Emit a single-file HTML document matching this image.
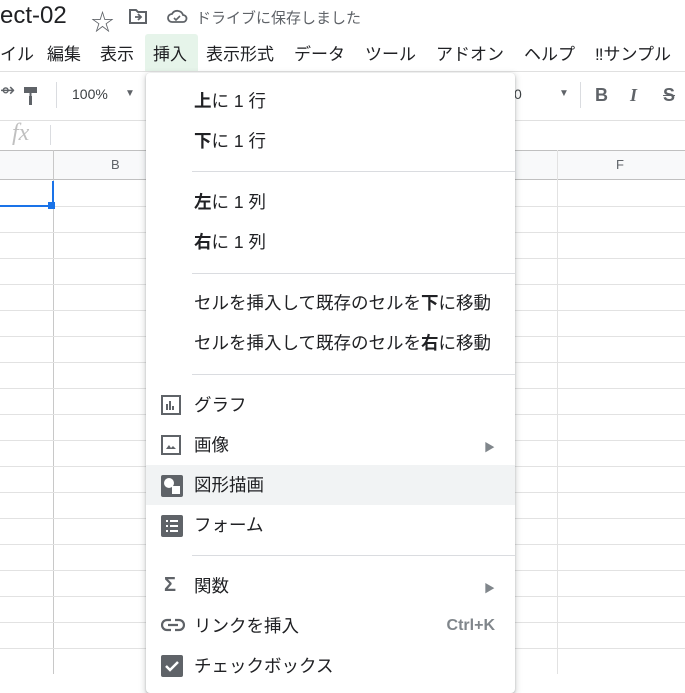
<!DOCTYPE html>
<html><head><meta charset="utf-8"><style>
body{margin:0;width:685px;height:674px;overflow:hidden;background:#fff;font-family:"Liberation Sans","Noto Sans CJK JP",sans-serif;position:relative;color:#202124}
.a{position:absolute}
.hl{position:absolute;left:0;width:685px;height:1px;background:#e2e2e2}
.vl{position:absolute;top:150px;width:1px;height:524px;background:#e2e2e2}
.menu{position:absolute;left:146px;top:73px;width:369px;height:620px;background:#fff;border-radius:4px;box-shadow:0 2px 6px 2px rgba(60,64,67,.15),0 1px 2px rgba(60,64,67,.3)}
.it{position:absolute;left:48px;font-size:17.5px;color:#202124;line-height:20px}
.sep{position:absolute;left:46px;right:0;height:1px;background:#dadce0}
.ic{position:absolute;left:15px}
.arr{position:absolute;right:20px;font-size:11px;color:#80868b}
.mb{position:absolute;top:40px;font-size:17px;color:#202124}
</style></head><body>
<div class="a" style="left:0;top:2px;font-size:24px;color:#202124">ect-02</div>
<div class="a" style="left:91px;top:3px;font-size:23px;color:#5f6368">☆</div>
<svg class="a" style="left:128px;top:7px" width="20" height="18" viewBox="0 0 20 18"><path d="M2 3h6l2 2h8v11H2z" fill="none" stroke="#5f6368" stroke-width="2"/><path d="M7 10h6M10 7l3 3-3 3" stroke="#5f6368" stroke-width="1.8" fill="none"/></svg>
<svg class="a" style="left:166px;top:8px" width="22" height="16" viewBox="0 0 22 16"><path d="M6 14a4 4 0 0 1 0-8 6 6 0 0 1 11 1 3.5 3.5 0 0 1 0 7z" fill="none" stroke="#5f6368" stroke-width="1.8"/><path d="M8 10l2 2 4-4" stroke="#5f6368" stroke-width="1.6" fill="none"/></svg>
<div class="a" style="left:196px;top:7px;font-size:15px;color:#5f6368">ドライブに保存しました</div>
<div class="a" style="left:145px;top:34px;width:53px;height:38px;background:#e6f4ea;border-radius:3px 3px 0 0"></div>
<div class="mb" style="left:0">イル</div><div class="mb" style="left:47px">編集</div><div class="mb" style="left:100px">表示</div><div class="mb" style="left:153px">挿入</div><div class="mb" style="left:206px">表示形式</div><div class="mb" style="left:294px">データ</div><div class="mb" style="left:365px">ツール</div><div class="mb" style="left:436px">アドオン</div><div class="mb" style="left:524px">ヘルプ</div><div class="mb" style="left:595px">‼サンプル</div>
<div class="a" style="left:0;top:71px;width:685px;height:1px;background:#e0e0e0"></div>
<div class="a" style="left:0;top:80px;width:10px;height:26px;font-size:18px;color:#5f6368">⇴</div>
<svg class="a" style="left:22px;top:86px" width="18" height="20"><path d="M2 1h13v6H2zM7 10h3v9H7z" fill="#5f6368"/><path d="M8.5 7v3" stroke="#5f6368" stroke-width="2"/></svg>
<div class="a" style="left:56px;top:82px;width:1px;height:26px;background:#dadce0"></div>
<div class="a" style="left:72px;top:86px;font-size:14px;color:#3c4043">100%</div>
<div class="a" style="left:125px;top:88px;font-size:10px;color:#5f6368">▼</div>
<div class="a" style="left:514px;top:86px;font-size:14px;color:#3c4043">0</div>
<div class="a" style="left:559px;top:88px;font-size:10px;color:#5f6368">▼</div>
<div class="a" style="left:580px;top:82px;width:1px;height:26px;background:#dadce0"></div>
<div class="a" style="left:595px;top:85px;font-size:18px;font-weight:bold;color:#5f6368">B</div>
<div class="a" style="left:630px;top:85px;font-size:18px;font-style:italic;font-weight:bold;color:#5f6368;font-family:'Liberation Serif',serif">I</div>
<div class="a" style="left:663px;top:85px;font-size:18px;font-weight:bold;color:#5f6368;text-decoration:line-through">S</div>
<div class="a" style="left:0;top:120px;width:685px;height:1px;background:#e0e0e0"></div>
<div class="a" style="left:12px;top:120px;font-size:24px;font-style:italic;color:#c0c0c0;font-family:'Liberation Serif',serif">fx</div>
<div class="a" style="left:50px;top:125px;width:1px;height:20px;background:#dadce0"></div>
<div class="a" style="left:0;top:150px;width:685px;height:30px;background:#f8f9fa;border-top:1px solid #c0c0c0;border-bottom:1px solid #c0c0c0;box-sizing:border-box"></div>
<div class="a" style="left:111px;top:157px;font-size:13px;color:#5f6368">B</div>
<div class="a" style="left:616px;top:157px;font-size:13px;color:#5f6368">F</div>
<div class="vl" style="left:53px;background:#c8c8c8"></div>
<div class="vl" style="left:557px"></div>
<div class="hl" style="top:206px"></div><div class="hl" style="top:232px"></div><div class="hl" style="top:258px"></div><div class="hl" style="top:284px"></div><div class="hl" style="top:310px"></div><div class="hl" style="top:336px"></div><div class="hl" style="top:362px"></div><div class="hl" style="top:388px"></div><div class="hl" style="top:414px"></div><div class="hl" style="top:440px"></div><div class="hl" style="top:466px"></div><div class="hl" style="top:492px"></div><div class="hl" style="top:518px"></div><div class="hl" style="top:544px"></div><div class="hl" style="top:570px"></div><div class="hl" style="top:596px"></div><div class="hl" style="top:622px"></div><div class="hl" style="top:648px"></div>
<div class="a" style="left:0;top:205px;width:52px;height:2px;background:#1a73e8"></div>
<div class="a" style="left:52px;top:181px;width:2px;height:24px;background:#1a73e8"></div>
<div class="a" style="left:48px;top:202px;width:7px;height:7px;background:#1a73e8"></div>

<div class="menu">
<div class="it" style="top:18px"><b>上</b>に 1 行</div>
<div class="it" style="top:58px"><b>下</b>に 1 行</div>
<div class="sep" style="top:98px"></div>
<div class="it" style="top:119px"><b>左</b>に 1 列</div>
<div class="it" style="top:159px"><b>右</b>に 1 列</div>
<div class="sep" style="top:200px"></div>
<div class="it" style="top:220px">セルを挿入して既存のセルを<b>下</b>に移動</div>
<div class="it" style="top:260px">セルを挿入して既存のセルを<b>右</b>に移動</div>
<div class="sep" style="top:301px"></div>
<svg class="ic" style="top:322px" width="20" height="20"><rect x="1" y="1" width="18" height="18" fill="none" stroke="#5f6368" stroke-width="2"/><path d="M6 9v6M9 6v9M12 11v4" stroke="#5f6368" stroke-width="2"/></svg>
<div class="it" style="top:322px">グラフ</div>
<svg class="ic" style="top:362px" width="20" height="20"><rect x="1" y="1" width="18" height="18" fill="none" stroke="#5f6368" stroke-width="2"/><path d="M5 14l3-4 2 3 2-2 3 3z" fill="#5f6368"/></svg>
<div class="it" style="top:362px">画像</div><div class="arr" style="top:366px">▶</div>
<div class="a" style="left:0;top:392px;width:369px;height:40px;background:#f1f3f4"></div>
<svg class="ic" style="top:402px" width="22" height="22"><rect width="22" height="22" rx="2" fill="#5f6368"/><circle cx="8" cy="8" r="5" fill="#fff"/><rect x="11" y="11" width="8" height="8" fill="#fff"/></svg>
<div class="it" style="top:402px">図形描画</div>
<svg class="ic" style="top:442px" width="22" height="22"><rect width="22" height="22" rx="2" fill="#5f6368"/><path d="M5 6h2M9 6h8M5 11h2M9 11h8M5 16h2M9 16h8" stroke="#fff" stroke-width="2"/></svg>
<div class="it" style="top:442px">フォーム</div>
<div class="sep" style="top:482px"></div>
<div class="ic" style="top:501px;left:18px;font-size:20px;color:#5f6368;font-weight:bold">Σ</div>
<div class="it" style="top:503px">関数</div><div class="arr" style="top:507px">▶</div>
<svg class="ic" style="top:545px" width="24" height="14"><path d="M10 2H6a5 5 0 0 0 0 10h4M14 2h4a5 5 0 0 1 0 10h-4M7 7h10" fill="none" stroke="#5f6368" stroke-width="2.2"/></svg>
<div class="it" style="top:543px">リンクを挿入</div>
<div class="a" style="right:20px;top:544px;font-size:16px;color:#80868b;font-weight:bold">Ctrl+K</div>
<svg class="ic" style="top:582px" width="22" height="22"><rect width="22" height="22" rx="2" fill="#5f6368"/><path d="M5 11l4 4 8-8" stroke="#fff" stroke-width="2.5" fill="none"/></svg>
<div class="it" style="top:583px">チェックボックス</div>
</div>
</body></html>
